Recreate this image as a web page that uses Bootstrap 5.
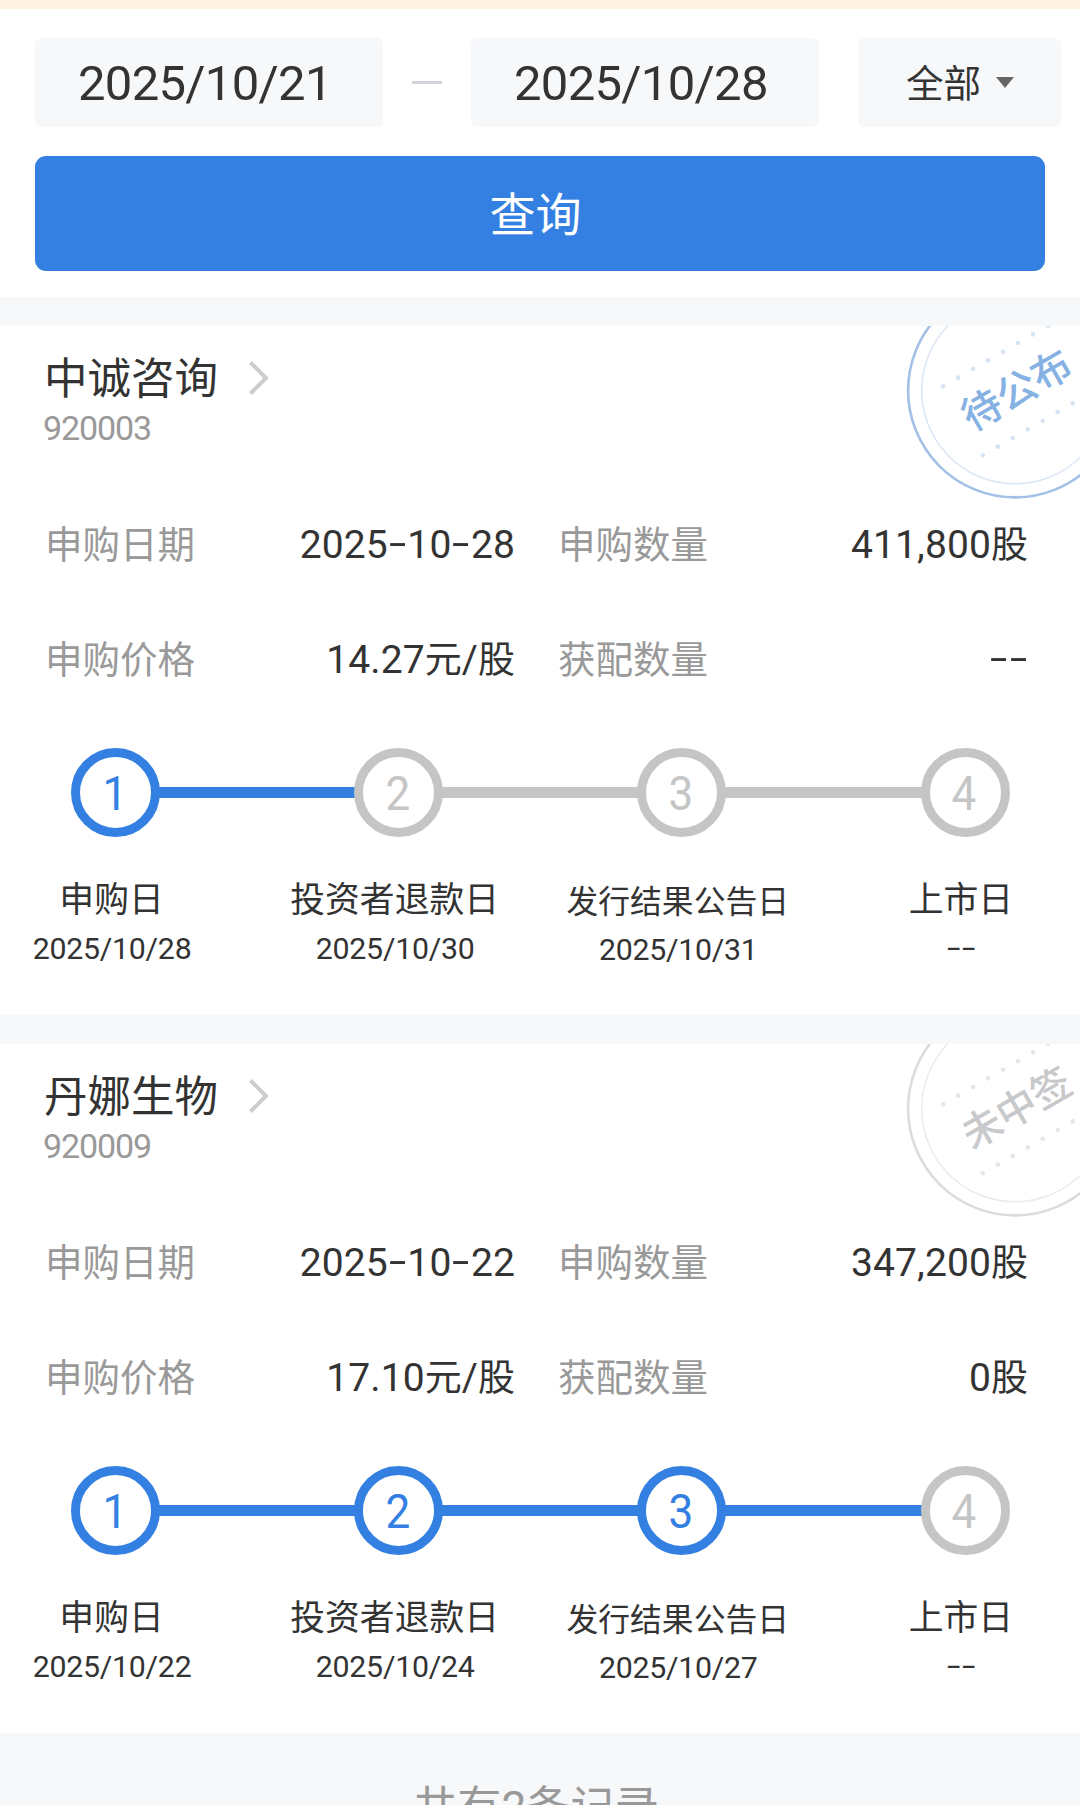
<!DOCTYPE html>
<html lang="zh-CN">
<head>
<meta charset="utf-8">
<meta name="viewport" content="width=device-width, initial-scale=1">
<title>申购查询</title>
<link href="https://cdn.jsdelivr.net/npm/bootstrap@5.3.0/dist/css/bootstrap.min.css" rel="stylesheet">
<style>
:root{--brand:#3380e2;--idle:#c5c5c5;--ink:#333;--soft:#999;--pane:#f7f8fa}
html,body{height:1805px;overflow:hidden}
body{font-family:Roboto,"Noto Sans CJK SC",sans-serif;color:var(--ink);background:var(--pane);font-size:37.5px;line-height:1}
.notice-strip{height:9px;background:#fff3e6}
.filter-pane{height:288px;padding:29px 19px 0 35px}
.field{height:89px;border-radius:6px;background:var(--pane);line-height:91px;white-space:nowrap}
.date-field{width:348px;padding-left:43px;font-size:49px;letter-spacing:-.7px}
.field-dash{width:30px;height:3px;background:#d0d3d9}
.type-field{width:203px;padding-left:48px;margin-left:39px;font-size:37.5px;gap:15px}
.type-field span{padding-top:4px}
.caret-down{width:18px;height:11px;fill:#666}
.query-btn{--bs-btn-bg:var(--brand);--bs-btn-color:#fff;--bs-btn-border-width:0;--bs-btn-hover-bg:var(--brand);--bs-btn-hover-color:#fff;
 width:1010px;height:115px;margin-top:29px;border-radius:11px;font-size:46px;line-height:1;padding:2px 9px 0 0}
.record{height:689px;margin-top:29px;background:#fff}
.record-name{font-size:43.5px;line-height:50px;padding:27px 0 0 44px;gap:31px}
.record-name span{padding-top:2px;margin-bottom:-2px}
.record-code{font-size:34px;line-height:40px;letter-spacing:-1.1px;color:var(--soft);padding-left:43px;margin-top:5px}
.facts{padding:40px 52px 0 45px}
.fact-line{height:115px;align-items:center}
.fact-line .tag{color:var(--soft);font-size:37.5px}
.fact-left,.fact-right{width:470px}
.figure-val{font-size:39px;letter-spacing:.12px;white-space:nowrap}
.figure-val .unit{font-size:37px;letter-spacing:0}
.hy{display:inline-block;width:.5em;text-align:center;transform:translateY(-.04em) scaleX(1.6)}
.track{padding:30px 0 0 71px}
.node{width:89px;height:89px;flex:none;border:9px solid var(--idle);border-radius:50%;color:var(--idle);font-size:49px;line-height:1}
.node span{transform:scaleX(.9);margin:2px 2px 0 0}
.link-bar{width:196.2px;height:11px;flex:none;background:var(--idle);margin:0 -1px}
.node.on{border-color:var(--brand);color:var(--brand)}
.link-bar.on{background:var(--brand)}
.stages{display:grid;grid-template-columns:repeat(4,283.1px);margin:40px 0 0 -30px;text-align:center}
.stage-name{font-size:34.8px;line-height:46px;white-space:nowrap}
.stage-name.tight{font-size:31.8px;padding-top:2px}
.stage-date{font-size:30.3px;line-height:40px;margin-top:6px;letter-spacing:-.25px;padding-left:1px}
.tight + .stage-date{margin-top:5px}
.stamp{position:absolute;right:0;top:0;width:180px;height:180px;color:#86b1e3}
.stamp.miss{color:#c8c9cb}
.stamp text{font-size:39.8px;font-weight:500;fill:currentColor;text-anchor:middle;font-family:"Noto Sans CJK SC",sans-serif}
.total{padding-top:50px;text-align:center;color:var(--soft);font-size:44.2px;line-height:50px;white-space:nowrap;padding-right:8px}
</style>
</head>
<body>
<div class="notice-strip"></div>
<section class="filter-pane bg-white">
  <div class="d-flex align-items-center">
    <div class="field date-field">2025/10/21</div>
    <div class="field-dash mx-auto"></div>
    <div class="field date-field">2025/10/28</div>
    <div class="field type-field d-flex align-items-center"><span>全部</span>
      <svg class="caret-down" viewBox="0 0 18 11"><path d="M0 0h18L9 11z"/></svg></div>
  </div>
  <button class="btn query-btn" type="button">查询</button>
</section>

<article class="record position-relative overflow-hidden">
  <svg class="stamp" viewBox="900 326 180 180">
    <circle cx="1015" cy="390.5" r="106.9" fill="none" stroke="#a3c1e6" stroke-width="2.6"/>
    <circle cx="1015" cy="390.5" r="93.3" fill="none" stroke="#dbe6f5" stroke-width="1.5"/>
    <g fill="none" stroke="#d7e3f3" stroke-width="4.6" stroke-linecap="round" stroke-dasharray="0 17.3">
      <path d="M943.2 386.3L1064 316.5"/><path d="M982.8 455.3L1090 393.4"/></g>
    <text transform="translate(1016.2 389.5) rotate(-30)" y="15">待公布</text>
  </svg>
  <div class="record-name d-flex align-items-center"><span>中诚咨询</span>
    <svg width="20" height="34" viewBox="0 0 20 34" fill="none" stroke="#ccc" stroke-width="4"><path d="M1.5 1.5L17 17 1.5 32.5"/></svg></div>
  <div class="record-code">920003</div>
  <div class="facts">
    <div class="fact-line d-flex justify-content-between">
      <div class="fact-left d-flex justify-content-between align-items-center"><span class="tag">申购日期</span><span class="figure-val">2025<span class="hy">-</span>10<span class="hy">-</span>28</span></div>
      <div class="fact-right d-flex justify-content-between align-items-center"><span class="tag">申购数量</span><span class="figure-val">411,800<span class="unit">股</span></span></div>
    </div>
    <div class="fact-line d-flex justify-content-between">
      <div class="fact-left d-flex justify-content-between align-items-center"><span class="tag">申购价格</span><span class="figure-val">14.27<span class="unit">元</span>/<span class="unit">股</span></span></div>
      <div class="fact-right d-flex justify-content-between align-items-center"><span class="tag">获配数量</span><span class="figure-val"><span class="hy">-</span><span class="hy">-</span></span></div>
    </div>
  </div>
  <div class="track d-flex align-items-center">
    <div class="node on d-flex align-items-center justify-content-center"><span>1</span></div><div class="link-bar on"></div>
    <div class="node d-flex align-items-center justify-content-center"><span>2</span></div><div class="link-bar"></div>
    <div class="node d-flex align-items-center justify-content-center"><span>3</span></div><div class="link-bar"></div>
    <div class="node d-flex align-items-center justify-content-center"><span>4</span></div>
  </div>
  <div class="stages">
    <div><div class="stage-name">申购日</div><div class="stage-date">2025/10/28</div></div>
    <div><div class="stage-name">投资者退款日</div><div class="stage-date">2025/10/30</div></div>
    <div><div class="stage-name tight">发行结果公告日</div><div class="stage-date">2025/10/31</div></div>
    <div><div class="stage-name">上市日</div><div class="stage-date"><span class="hy">-</span><span class="hy">-</span></div></div>
  </div>
</article>

<article class="record position-relative overflow-hidden">
  <svg class="stamp miss" viewBox="900 326 180 180">
    <circle cx="1015" cy="390.5" r="106.9" fill="none" stroke="#dcdcdd" stroke-width="2.6"/>
    <circle cx="1015" cy="390.5" r="93.3" fill="none" stroke="#ebebeb" stroke-width="1.5"/>
    <g fill="none" stroke="#e6e6e7" stroke-width="4.6" stroke-linecap="round" stroke-dasharray="0 17.3">
      <path d="M943.2 386.3L1064 316.5"/><path d="M982.8 455.3L1090 393.4"/></g>
    <text transform="translate(1016.2 389.5) rotate(-30)" y="15">未中签</text>
  </svg>
  <div class="record-name d-flex align-items-center"><span>丹娜生物</span>
    <svg width="20" height="34" viewBox="0 0 20 34" fill="none" stroke="#ccc" stroke-width="4"><path d="M1.5 1.5L17 17 1.5 32.5"/></svg></div>
  <div class="record-code">920009</div>
  <div class="facts">
    <div class="fact-line d-flex justify-content-between">
      <div class="fact-left d-flex justify-content-between align-items-center"><span class="tag">申购日期</span><span class="figure-val">2025<span class="hy">-</span>10<span class="hy">-</span>22</span></div>
      <div class="fact-right d-flex justify-content-between align-items-center"><span class="tag">申购数量</span><span class="figure-val">347,200<span class="unit">股</span></span></div>
    </div>
    <div class="fact-line d-flex justify-content-between">
      <div class="fact-left d-flex justify-content-between align-items-center"><span class="tag">申购价格</span><span class="figure-val">17.10<span class="unit">元</span>/<span class="unit">股</span></span></div>
      <div class="fact-right d-flex justify-content-between align-items-center"><span class="tag">获配数量</span><span class="figure-val">0<span class="unit">股</span></span></div>
    </div>
  </div>
  <div class="track d-flex align-items-center">
    <div class="node on d-flex align-items-center justify-content-center"><span>1</span></div><div class="link-bar on"></div>
    <div class="node on d-flex align-items-center justify-content-center"><span>2</span></div><div class="link-bar on"></div>
    <div class="node on d-flex align-items-center justify-content-center"><span>3</span></div><div class="link-bar on"></div>
    <div class="node d-flex align-items-center justify-content-center"><span>4</span></div>
  </div>
  <div class="stages">
    <div><div class="stage-name">申购日</div><div class="stage-date">2025/10/22</div></div>
    <div><div class="stage-name">投资者退款日</div><div class="stage-date">2025/10/24</div></div>
    <div><div class="stage-name tight">发行结果公告日</div><div class="stage-date">2025/10/27</div></div>
    <div><div class="stage-name">上市日</div><div class="stage-date"><span class="hy">-</span><span class="hy">-</span></div></div>
  </div>
</article>
<footer class="total">共有2条记录</footer>
<script src="https://cdn.jsdelivr.net/npm/bootstrap@5.3.0/dist/js/bootstrap.bundle.min.js"></script>
</body>
</html>
